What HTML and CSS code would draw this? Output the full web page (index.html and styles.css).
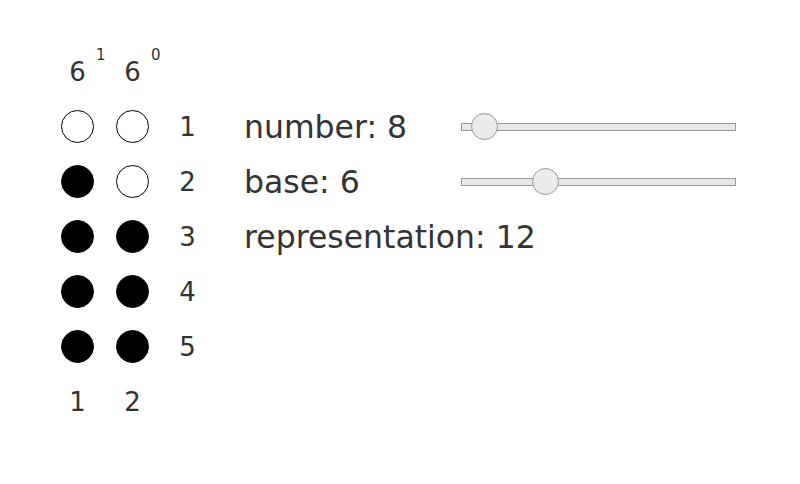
FILE: index.html
```html
<!DOCTYPE html>
<html lang="en">
<head>
    <meta charset="UTF-8">
    <meta name="viewport" content="width=device-width, initial-scale=1.0">
    <title>Place Value Dots</title>
    <link rel="stylesheet" href="styles.css">
</head>
<body>
    <div class="page">
        <div class="digits">
            <div class="cell head">6<span class="power">1</span></div>
            <div class="cell head">6<span class="power">0</span></div>
            <div class="cell"></div>

            <div class="cell"><span class="dot"></span></div>
            <div class="cell"><span class="dot"></span></div>
            <div class="cell label">1</div>

            <div class="cell"><span class="dot filled"></span></div>
            <div class="cell"><span class="dot"></span></div>
            <div class="cell label">2</div>

            <div class="cell"><span class="dot filled"></span></div>
            <div class="cell"><span class="dot filled"></span></div>
            <div class="cell label">3</div>

            <div class="cell"><span class="dot filled"></span></div>
            <div class="cell"><span class="dot filled"></span></div>
            <div class="cell label">4</div>

            <div class="cell"><span class="dot filled"></span></div>
            <div class="cell"><span class="dot filled"></span></div>
            <div class="cell label">5</div>

            <div class="cell label">1</div>
            <div class="cell label">2</div>
            <div class="cell"></div>
        </div>

        <div class="controls">
            <div class="control-row">
                <span class="control-label">number: 8</span>
                <input type="range" class="slider" min="1" max="200" value="8">
            </div>
            <div class="control-row">
                <span class="control-label">base: 6</span>
                <input type="range" class="slider" min="2" max="16" value="6">
            </div>
            <div class="control-row">
                <span class="control-label">representation: 12</span>
            </div>
        </div>
    </div>
</body>
</html>
```

FILE: styles.css
```css
body {
    margin: 0;
    background: #fff;
    font-family: "DejaVu Sans", Verdana, sans-serif;
    color: #333;
}

.page {
    display: flex;
    gap: 29px;
    padding: 44px 0 0 50px;
}

.digits {
    display: grid;
    grid-template-columns: repeat(3, 55px);
    grid-auto-rows: 55px;
}

.cell {
    display: flex;
    align-items: center;
    justify-content: center;
    font-size: 26px;
}

.head {
    position: relative;
}

.power {
    position: absolute;
    left: 46px;
    top: 2px;
    font-size: 15px;
}

.dot {
    width: 33px;
    height: 33px;
    box-sizing: border-box;
    border: 1.5px solid #000;
    border-radius: 50%;
    background: #fff;
}

.dot.filled {
    background: #000;
}

.controls {
    display: flex;
    flex-direction: column;
    margin-top: 55px;
}

.control-row {
    display: flex;
    align-items: center;
    height: 55px;
}

.control-label {
    width: 217px;
    font-size: 31.5px;
    white-space: nowrap;
}

.slider {
    -webkit-appearance: none;
    appearance: none;
    width: 275px;
    height: 27px;
    margin: 0;
    background: transparent;
}

.slider::-webkit-slider-runnable-track {
    height: 8px;
    box-sizing: border-box;
    background: #e8e8e8;
    border: 1px solid #999;
}

.slider::-webkit-slider-thumb {
    -webkit-appearance: none;
    width: 27px;
    height: 27px;
    margin-top: -10.5px;
    box-sizing: border-box;
    border-radius: 50%;
    background: #ebebeb;
    border: 1px solid #999;
}
```
